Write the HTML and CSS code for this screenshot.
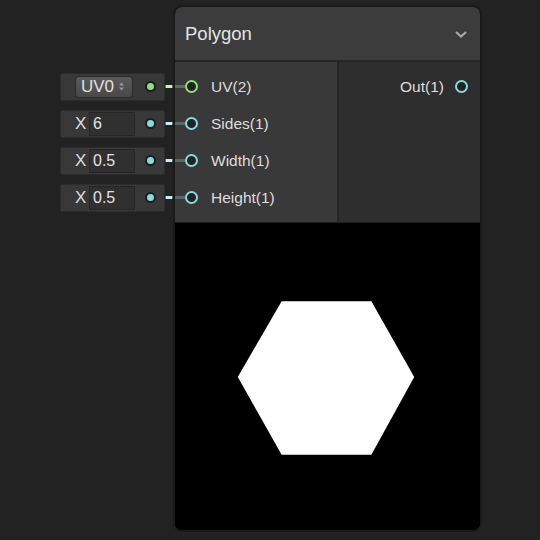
FILE: index.html
```html
<!DOCTYPE html>
<html>
<head>
<meta charset="utf-8">
<link rel="stylesheet" href="styles.css">
</head>
<body>
<div class="canvas">
  <div class="inputs">
    <div class="in-row">
      <div class="field">
        <div class="select"><span>UV0</span><svg class="updown" width="7" height="11" viewBox="0 0 7 11"><path d="M1 4.5 L3.5 1.5 L6 4.5 Z M1 6.5 L3.5 9.5 L6 6.5 Z" fill="#9a9a9a"/></svg></div>
      </div>
      <div class="dot green"></div>
      <div class="wire green"><span class="tip"></span></div>
    </div>
    <div class="in-row">
      <div class="field"><span class="xl">X</span><div class="num">6</div></div>
      <div class="dot cyan"></div>
      <div class="wire cyan"><span class="tip"></span></div>
    </div>
    <div class="in-row">
      <div class="field"><span class="xl">X</span><div class="num">0.5</div></div>
      <div class="dot cyan"></div>
      <div class="wire cyan"><span class="tip"></span></div>
    </div>
    <div class="in-row">
      <div class="field"><span class="xl">X</span><div class="num">0.5</div></div>
      <div class="dot cyan"></div>
      <div class="wire cyan"><span class="tip"></span></div>
    </div>
  </div>
  <div class="node">
    <div class="header">
      <span class="title">Polygon</span>
      <svg class="chev" width="14" height="9" viewBox="0 0 14 9"><path d="M2 2 L7 6.5 L12 2" fill="none" stroke="#a8a8a8" stroke-width="2.2"/></svg>
    </div>
    <div class="body">
      <div class="col-in">
        <div class="port"><span class="pwire green"></span><span class="ring green"></span><span class="lbl">UV(2)</span></div>
        <div class="port"><span class="pwire cyan"></span><span class="ring cyan"></span><span class="lbl">Sides(1)</span></div>
        <div class="port"><span class="pwire cyan"></span><span class="ring cyan"></span><span class="lbl">Width(1)</span></div>
        <div class="port"><span class="pwire cyan"></span><span class="ring cyan"></span><span class="lbl">Height(1)</span></div>
      </div>
      <div class="col-out">
        <div class="port out"><span class="lbl">Out(1)</span><span class="ring cyan"></span></div>
      </div>
    </div>
    <div class="preview">
      <svg width="306" height="308" viewBox="0 0 306 308"><polygon points="107,78 197,78 240,154 197,232 107,232 63,154" fill="#ffffff"/></svg>
    </div>
  </div>
</div>
</body>
</html>
```
FILE: styles.css
```css
html, body {
  margin: 0;
  padding: 0;
  background: #222222;
  width: 540px;
  height: 540px;
  overflow: hidden;
  font-family: "Liberation Sans", Arial, sans-serif;
  color: #dcdcdc;
}
.canvas {
  display: flex;
  align-items: flex-start;
  padding-top: 5px;
}
.inputs {
  width: 173px;
  margin-top: 63px;
  display: flex;
  flex-direction: column;
}
.in-row {
  height: 37px;
  display: flex;
  align-items: center;
}
.field {
  margin-left: 60px;
  width: 105px;
  height: 28px;
  box-sizing: border-box;
  background: #383838;
  border: 1px solid #2c2c2c;
  border-radius: 2px;
  display: flex;
  align-items: center;
  position: relative;
  z-index: 1;
}
.select {
  margin-left: 14px;
  width: 58px;
  height: 22px;
  box-sizing: border-box;
  border: 1px solid #2a2a2a;
  border-radius: 4px;
  background: linear-gradient(#5a5a5a, #484848);
  display: flex;
  align-items: center;
  justify-content: center;
  gap: 4px;
  font-size: 17px;
  color: #e0e0e0;
  padding-right: 2px;
}
.updown { display: block; }
.xl {
  margin-left: 14px;
  width: 14px;
  font-size: 17px;
  color: #dedede;
}
.num {
  width: 46px;
  height: 24px;
  box-sizing: border-box;
  background: #303030;
  border: 1px solid #262626;
  font-size: 16px;
  line-height: 22px;
  padding-left: 3px;
  color: #e2e2e2;
}
.dot {
  width: 7px;
  height: 7px;
  border-radius: 50%;
  border: 2px solid #1c1c1c;
  margin-left: -20px;
  position: relative;
  z-index: 2;
}
.dot.green { background: #8fe07a; }
.dot.cyan { background: #86dbe0; }
.wire {
  flex: 1;
  height: 3px;
  display: flex;
  justify-content: flex-end;
  margin-right: -2px;
}
.wire.green { background: #5f6d5c; }
.wire.cyan { background: #566868; }
.tip {
  width: 6px;
  height: 3px;
  margin-right: 3px;
}
.wire.green .tip { background: #c9f2c4; }
.wire.cyan .tip { background: #c4f2f4; }
.node {
  width: 309px;
  height: 527px;
  box-sizing: border-box;
  border: 2px solid #1a1a1a;
  border-radius: 9px;
  overflow: hidden;
  background: #000;
  display: flex;
  flex-direction: column;
  position: relative;
  z-index: 3;
}
.header {
  height: 53px;
  background: #3c3c3c;
  border-bottom: 2px solid #262626;
  display: flex;
  align-items: center;
  justify-content: space-between;
  padding: 0 12px 0 10px;
  flex: none;
}
.title {
  font-size: 18.5px;
  color: #e4e4e4;
}
.chev { display: block; margin-top: 1px; }
.body {
  height: 160px;
  display: flex;
  flex: none;
  border-bottom: 1px solid #1c1c1c;
}
.col-in {
  width: 162px;
  background: #393939;
  border-right: 2px solid #262626;
  padding-top: 6px;
  display: flex;
  flex-direction: column;
}
.col-out {
  flex: 1;
  background: #2e2e2e;
  padding-top: 6px;
  display: flex;
  flex-direction: column;
}
.port {
  height: 37px;
  display: flex;
  align-items: center;
  font-size: 15.5px;
}
.pwire {
  width: 10px;
  height: 3px;
}
.pwire.green { background: #5f6d5c; }
.pwire.cyan { background: #566868; }
.ring {
  width: 9px;
  height: 9px;
  border-radius: 50%;
  background: #222;
  flex: none;
}
.ring.green { border: 2px solid #8fe07a; }
.ring.cyan { border: 2px solid #86dbe0; }
.port .lbl { margin-left: 13px; color: #dddddd; }
.port.out { justify-content: flex-end; padding-right: 12px; }
.port.out .lbl { margin-left: 0; margin-right: 11px; }
.preview {
  flex: 1;
  background: #000;
  display: flex;
  align-items: center;
  justify-content: center;
}
.preview svg { display: block; }
```
